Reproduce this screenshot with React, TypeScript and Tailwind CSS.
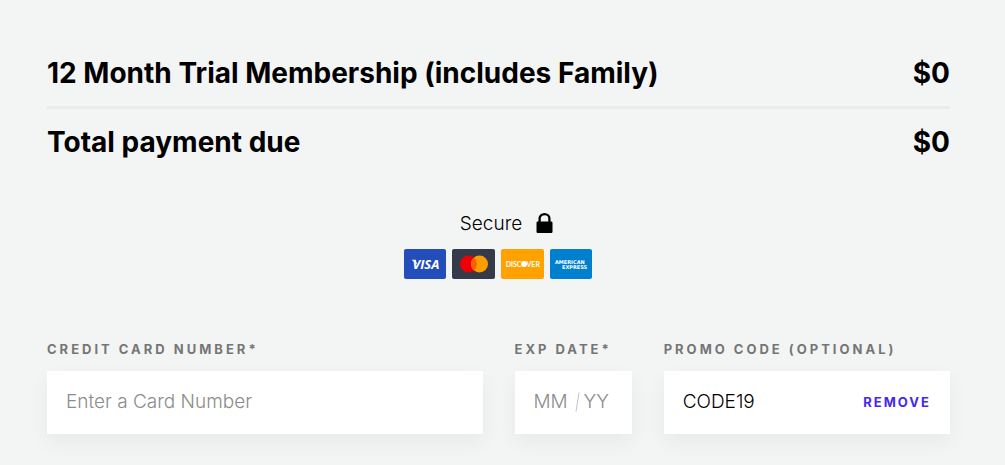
import { useState } from "react";

const labelClass = "block text-[13px] leading-5 font-bold tracking-[3px] whitespace-nowrap uppercase text-[#757575]";
const fieldClass = "mt-3 flex h-[63px] items-center bg-white px-[19px] pb-0.5 shadow-[0_8px_20px_rgba(0,0,0,0.05)]";
const inputClass = "min-w-0 bg-transparent text-[19px] leading-6 font-light text-black outline-none placeholder:text-[#8c8c8c] placeholder:opacity-100";

function LineItem({ name, price }: { name: string; price: string }) {
  return (
    <div className="flex items-center justify-between text-[28px] leading-9 font-bold">
      <span>{name}</span>
      <span>{price}</span>
    </div>
  );
}

function LockIcon() {
  return (
    <svg width="17" height="22" viewBox="0 0 17 22" aria-hidden="true">
      <path d="M3.6 9V5.4a4.9 4.2 0 0 1 9.8 0V9" fill="none" stroke="#000" strokeWidth="2.3" />
      <rect x="0.5" y="8.5" width="16" height="11.5" rx="1.2" fill="#000" />
    </svg>
  );
}

function CardLogos() {
  return (
    <div className="flex justify-center gap-1.5 pr-px">
      <svg width="42" height="30" viewBox="0 0 42 30" role="img" aria-label="Visa">
        <rect width="42" height="30" rx="2" fill="#224dba" />
        <path d="M7.6 10.8h4l1.6 5z" fill="#fff" />
        <text x="8.5" y="20" fontSize="13" fontWeight="700" fontStyle="italic" fontFamily="Open Sans, sans-serif" fill="#fff">
          VISA
        </text>
      </svg>
      <svg width="43" height="30" viewBox="0 0 43 30" role="img" aria-label="Mastercard">
        <rect width="43" height="30" rx="2" fill="#353a48" />
        <circle cx="16.5" cy="15" r="8.5" fill="#ed0006" />
        <circle cx="27.5" cy="15" r="8.5" fill="#f9a000" />
        <path d="M22 8.5a8.5 8.5 0 0 1 0 13a8.5 8.5 0 0 1 0-13z" fill="#ff5e00" />
      </svg>
      <svg width="43" height="30" viewBox="0 0 43 30" role="img" aria-label="Discover">
        <rect width="43" height="30" rx="2" fill="#ffa200" />
        <g fill="#fff" fontSize="7" fontWeight="700" fontFamily="Lato, sans-serif">
          <text x="20.5" y="17.5" textAnchor="end">DISC</text>
          <text x="25.5" y="17.5">VER</text>
          <circle cx="23" cy="15" r="3" />
        </g>
      </svg>
      <svg width="42" height="30" viewBox="0 0 42 30" role="img" aria-label="American Express">
        <rect width="42" height="30" rx="2" fill="#007fcf" />
        <g fill="#fff" fontSize="5" fontWeight="700" fontFamily="DejaVu Sans, sans-serif">
          <text x="5" y="14.5">AMERICAN</text>
          <text x="12" y="20">EXPRESS</text>
        </g>
      </svg>
    </div>
  );
}

export default function App() {
  const [promo, setPromo] = useState("CODE19");

  return (
    <main className="min-h-screen bg-[#f3f5f4] pt-[55px] pr-[55px] pb-[31px] pl-[47px] font-['Inter',sans-serif] text-black">
      <section className="flex flex-col gap-[15px]">
        <LineItem name="12 Month Trial Membership (includes Family)" price="$0" />
        <hr className="border-t-[3px] border-[#ebebeb]" />
        <LineItem name="Total payment due" price="$0" />
      </section>

      <section className="mt-[52px]">
        <div className="mb-[13px] flex h-6 items-center justify-center gap-3.5 pl-4">
          <span className="text-[19px] leading-6 font-light">Secure</span>
          <LockIcon />
        </div>
        <CardLogos />
      </section>

      <form className="mt-[60px] grid grid-cols-[435fr_117fr_286fr] gap-x-8" onSubmit={(e) => e.preventDefault()}>
        <div className="min-w-0">
          <label htmlFor="card-number" className={labelClass}>Credit Card Number*</label>
          <div className={fieldClass}>
            <input id="card-number" className={`${inputClass} w-full`} placeholder="Enter a Card Number" />
          </div>
        </div>

        <div className="min-w-0">
          <label htmlFor="exp-month" className={labelClass}>Exp Date*</label>
          <div className={fieldClass}>
            <input id="exp-month" className={`${inputClass} w-[41px]`} placeholder="MM" maxLength={2} />
            <svg className="shrink-0" width="5" height="20" viewBox="0 0 5 20" aria-hidden="true">
              <path d="M4 0.5L1 19.5" stroke="#c4c4c4" />
            </svg>
            <input aria-label="Expiration year" className={`${inputClass} ml-1 w-[29px]`} placeholder="YY" maxLength={2} />
          </div>
        </div>

        <div className="min-w-0">
          <label htmlFor="promo" className={labelClass}>Promo Code (optional)</label>
          <div className={fieldClass}>
            <input id="promo" className={`${inputClass} flex-1`} value={promo} onChange={(e) => setPromo(e.target.value)} />
            <button type="button" onClick={() => setPromo("")} className="cursor-pointer text-[13px] leading-5 font-bold tracking-[2px] text-[#4428f2] uppercase">
              Remove
            </button>
          </div>
        </div>
      </form>
    </main>
  );
}
